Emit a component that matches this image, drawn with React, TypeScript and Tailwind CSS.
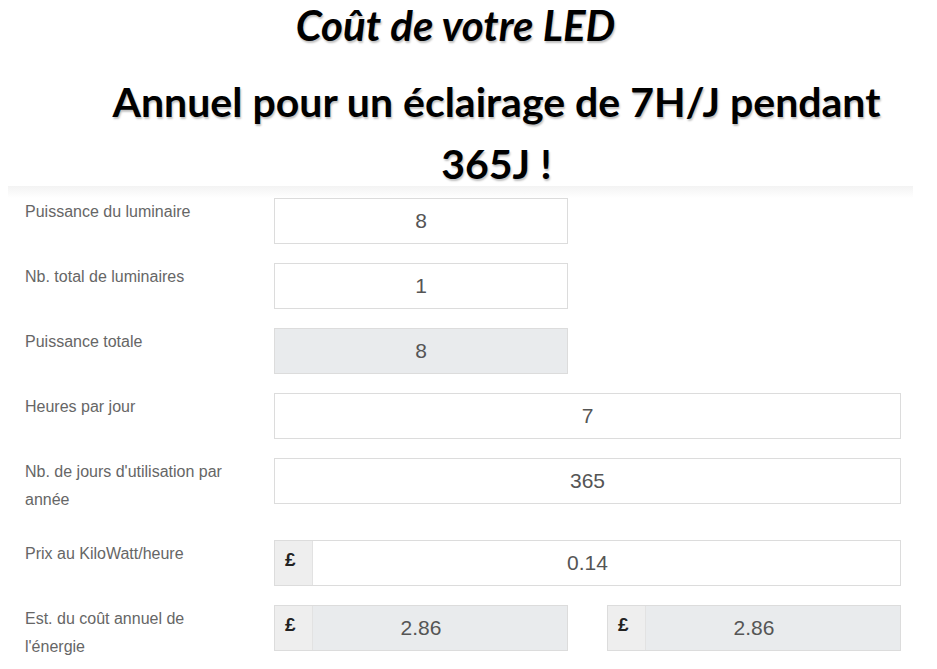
const labelFont = { fontFamily: '"Liberation Sans", Arial, sans-serif' };

type Row = {
  label: string;
  value?: string;
  kind: "half" | "full" | "readonly" | "money" | "double";
};

const rows: Row[] = [
  { label: "Puissance du luminaire", value: "8", kind: "half" },
  { label: "Nb. total de luminaires", value: "1", kind: "half" },
  { label: "Puissance totale", value: "8", kind: "readonly" },
  { label: "Heures par jour", value: "7", kind: "full" },
  { label: "Nb. de jours d'utilisation par année", value: "365", kind: "full" },
  { label: "Prix au KiloWatt/heure", value: "0.14", kind: "money" },
  { label: "Est. du coût annuel de l'énergie", value: "2.86", kind: "double" },
];

const Plain = ({ value, gray }: { value?: string; gray?: boolean }) => (
  <div
    className={`h-[46px] border border-[#dcdcdc] flex items-center justify-center text-[21px] text-[#555] ${
      gray ? "bg-[#e9ebed]" : "bg-white"
    }`}
    style={labelFont}
  >
    {value}
  </div>
);

const Money = ({ value, gray }: { value?: string; gray?: boolean }) => (
  <div className="h-[46px] border border-[#dcdcdc] flex" style={labelFont}>
    <div className="w-[38px] shrink-0 bg-[#eeeeee] border-r border-[#e2e2e2] flex items-center pl-[10px] pb-[6px] text-[19px] font-bold text-[#222]">
      £
    </div>
    <div
      className={`flex-1 flex items-center justify-center pr-[38px] text-[21px] text-[#555] ${
        gray ? "bg-[#e9ebed]" : "bg-white"
      }`}
    >
      {value}
    </div>
  </div>
);

const FormRow = ({ row }: { row: Row }) => {
  return (
    <div className="flex items-start">
      <div
        className="w-[215px] shrink-0 text-[16px] leading-[28px] text-[#666] pb-[7px]"
        style={labelFont}
      >
        {row.label}
      </div>
      <div className="ml-[34px] w-[627px]">
        {row.kind === "half" && (
          <div className="w-[294px]">
            <Plain value={row.value} />
          </div>
        )}
        {row.kind === "readonly" && (
          <div className="w-[294px]">
            <Plain value={row.value} gray />
          </div>
        )}
        {row.kind === "full" && <Plain value={row.value} />}
        {row.kind === "money" && <Money value={row.value} />}
        {row.kind === "double" && (
          <div className="grid grid-cols-2 gap-x-[39px]">
            <Money value={row.value} gray />
            <Money value={row.value} gray />
          </div>
        )}
      </div>
    </div>
  );
};

export default function App() {
  return (
    <div className="w-[937px] h-[669px] overflow-hidden bg-white">
      <h1
        className="pt-[2px] text-center pr-[26px] text-[42px] leading-[46px] font-bold italic text-black [text-shadow:1px_2px_2px_rgba(0,0,0,0.25)]"
        style={{ fontFamily: 'Lato, "Open Sans", sans-serif' }}
      >
        Coût de votre LED
      </h1>
      <h2
        className="mt-[23px] text-center pl-[56px] text-[41px] leading-[62px] font-bold text-black [text-shadow:1px_2px_2px_rgba(0,0,0,0.25)]"
        style={{ fontFamily: 'Lato, "Open Sans", sans-serif' }}
      >
        Annuel pour un éclairage de 7H/J pendant
        <br />
        365J !
      </h2>
      <div className="relative -mt-[9px] ml-[8px] w-[905px]">
        <div className="h-[12px] bg-gradient-to-b from-[#f3f3f3] to-white" />
        <div className="pl-[17px] flex flex-col gap-y-[19px]">
          {rows.map((row) => (
            <FormRow key={row.label} row={row} />
          ))}
        </div>
      </div>
    </div>
  );
}
